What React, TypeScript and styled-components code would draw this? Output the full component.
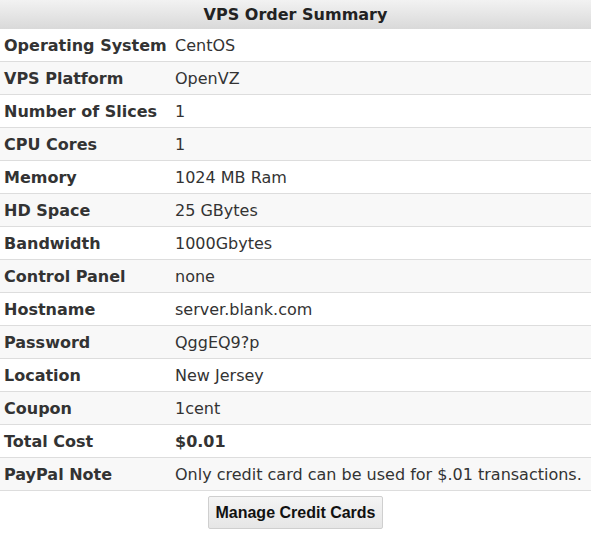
import React from "react";
import styled, { createGlobalStyle } from "styled-components";

const Global = createGlobalStyle`
  html, body { margin: 0; padding: 0; background: #fff; }
  body { font-family: "DejaVu Sans", Verdana, sans-serif; color: #333; }
`;

const Wrap = styled.div`
  width: 591px;
  display: flex;
  flex-direction: column;
  align-items: center;
`;

const Table = styled.table`
  width: 591px;
  border-collapse: collapse;
  font-size: 16px;
`;

const HeadCell = styled.th`
  height: 29px;
  padding: 0;
  font-size: 16px;
  font-weight: bold;
  color: #222;
  text-align: center;
  background: linear-gradient(#f2f2f2, #d9d9d9);
`;

const Row = styled.tr<{ $alt: boolean }>`
  background: ${(p) => (p.$alt ? "#f8f8f8" : "#fff")};
  border-bottom: 1px solid #dddddd;
`;

const Label = styled.td`
  width: 163px;
  height: 31px;
  padding: 1px 4px 0;
  font-weight: bold;
  color: #333;
  white-space: nowrap;
`;

const Value = styled.td<{ $bold?: boolean }>`
  padding: 1px 4px 0;
  color: #333;
  font-weight: ${(p) => (p.$bold ? "bold" : "normal")};
  white-space: nowrap;
`;

const Button = styled.button`
  margin-top: 5px;
  height: 33px;
  padding: 0 6px;
  font-family: "Liberation Sans", Arial, sans-serif;
  font-weight: bold;
  font-size: 16px;
  color: #111;
  background: linear-gradient(#f4f4f4, #e6e6e6);
  border: 1px solid #cfcfcf;
  border-radius: 2px;
`;

const rows: [string, string, boolean?][] = [
  ["Operating System", "CentOS"],
  ["VPS Platform", "OpenVZ"],
  ["Number of Slices", "1"],
  ["CPU Cores", "1"],
  ["Memory", "1024 MB Ram"],
  ["HD Space", "25 GBytes"],
  ["Bandwidth", "1000Gbytes"],
  ["Control Panel", "none"],
  ["Hostname", "server.blank.com"],
  ["Password", "QggEQ9?p"],
  ["Location", "New Jersey"],
  ["Coupon", "1cent"],
  ["Total Cost", "$0.01", true],
  ["PayPal Note", "Only credit card can be used for $.01 transactions."],
];

export default function App() {
  return (
    <Wrap>
      <Global />
      <Table>
        <thead>
          <tr>
            <HeadCell colSpan={2}>VPS Order Summary</HeadCell>
          </tr>
        </thead>
        <tbody>
          {rows.map(([k, v, b], i) => (
            <Row key={k} $alt={i % 2 === 1}>
              <Label>{k}</Label>
              <Value $bold={!!b}>{v}</Value>
            </Row>
          ))}
        </tbody>
      </Table>
      <Button>Manage Credit Cards</Button>
    </Wrap>
  );
}
